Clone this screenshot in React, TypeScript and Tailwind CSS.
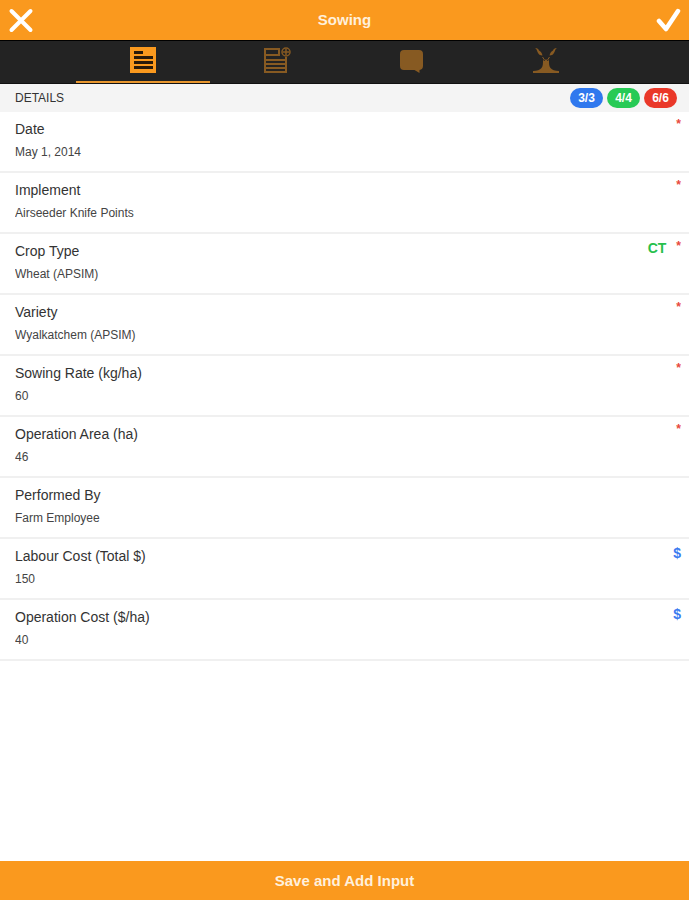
import { useState } from "react";

type Field = {
  id: string;
  label: string;
  value: string;
  required?: boolean;
  cost?: boolean;
  tag?: string;
};

const FIELDS: Field[] = [
  { id: "date", label: "Date", value: "May 1, 2014", required: true },
  { id: "implement", label: "Implement", value: "Airseeder Knife Points", required: true },
  { id: "crop", label: "Crop Type", value: "Wheat (APSIM)", required: true, tag: "CT" },
  { id: "variety", label: "Variety", value: "Wyalkatchem (APSIM)", required: true },
  { id: "rate", label: "Sowing Rate (kg/ha)", value: "60", required: true },
  { id: "area", label: "Operation Area (ha)", value: "46", required: true },
  { id: "performed", label: "Performed By", value: "Farm Employee" },
  { id: "labour", label: "Labour Cost (Total $)", value: "150", cost: true },
  { id: "operation", label: "Operation Cost ($/ha)", value: "40", cost: true },
];

function DetailsIcon() {
  return (
    <svg width="28" height="28" viewBox="0 0 28 28" fill="currentColor">
      <rect x="1" y="2" width="26" height="26" />
      <g fill="#2a1a0a">
        <rect x="5" y="6" width="9" height="3" />
        <rect x="5" y="11" width="19" height="3" />
        <rect x="5" y="16" width="19" height="3" />
        <rect x="5" y="21" width="19" height="3" />
      </g>
    </svg>
  );
}

function AddInputIcon() {
  return (
    <svg width="28" height="28" viewBox="0 0 28 28" fill="none" stroke="currentColor" strokeWidth="2">
      <path d="M17 4H2v23h21V12" />
      <path d="M2 10h15M2 15h21M2 19h21M2 23h21M16 4v6" />
      <circle cx="23" cy="7" r="4" strokeWidth="1.500" />
      <path d="M23 4v6M20 7h6" strokeWidth="1.500" />
    </svg>
  );
}

function CommentIcon() {
  return (
    <svg width="28" height="28" viewBox="0 0 28 28" fill="currentColor">
      <path d="M6 5h15a4 4 0 0 1 4 4v12a4 4 0 0 1-3.500 4v3l-5-3H6a4 4 0 0 1-4-4V9a4 4 0 0 1 4-4z" />
    </svg>
  );
}

function SoilIcon() {
  return (
    <svg width="28" height="28" viewBox="0 0 28 28" fill="currentColor">
      <path d="M1 28v-2c4-.3 7-1 8.500-3 1.500-1.500 1.500-4.500 1.500-8l1.500 1 1.500-2 1.500 2 1.500-1c0 3.500 0 6.500 1.500 8 1.500 2 4.500 2.700 8.500 3v2z" />
      <path d="M3 3c2.500 0 3.500 1 4 2.500 1.500.5 3 2.500 3.500 5-2.500 0-4-1-5-3.500C5 5.500 4.500 4 3 3z" />
      <path d="M25 3c-2.500 0-3.500 1-4 2.500-1.500.5-3 2.500-3.500 5 2.500 0 4-1 5-3.500.5-1.500 1-3 2.500-4z" />
      <path d="M10.500 12l2 3M17.500 12l-2 3" stroke="currentColor" strokeWidth="1" />
    </svg>
  );
}

const TABS = [
  { name: "Details", Icon: DetailsIcon },
  { name: "Inputs", Icon: AddInputIcon },
  { name: "Comments", Icon: CommentIcon },
  { name: "Soil", Icon: SoilIcon },
];

export default function App() {
  const [tab, setTab] = useState(0);
  const [values, setValues] = useState(() => FIELDS.map((f) => f.value));

  const changeValue = (index: number, value: string) => {
    setValues(values.map((v, i) => (i === index ? value : v)));
  };

  return (
    <div className="flex min-h-screen flex-col bg-white font-['Liberation_Sans',Arial,sans-serif] text-[#333333]">
      {/* TOP BAR */}
      <header className="flex h-10 items-center justify-between bg-[#fa991e] px-2 text-white">
        <button type="button" aria-label="Close">
          <svg width="26" height="26" viewBox="0 0 26 26" fill="none" stroke="currentColor" strokeWidth="4" strokeLinecap="round">
            <path d="M3.500 4l19 19M22.500 4l-19 19" />
          </svg>
        </button>
        <h1 className="text-[15px] leading-6 font-bold text-[#fff0dc]">Sowing</h1>
        <button type="button" aria-label="Done">
          <svg width="26" height="26" viewBox="0 0 26 26" fill="none" stroke="currentColor" strokeWidth="4.500" strokeLinecap="round" strokeLinejoin="round">
            <path d="M4 14l7 8L23 4" />
          </svg>
        </button>
      </header>

      {/* TABS */}
      <nav className="flex h-11 border-t border-b border-t-black border-b-[#111] bg-[#232323] px-[11%]">
        {TABS.map(({ name, Icon }, i) => (
          <button
            key={name}
            type="button"
            aria-label={name}
            onClick={() => setTab(i)}
            className={`flex flex-1 justify-center border-b-2 pt-1 ${
              tab === i ? "border-[#e8962e] text-[#fa991e]" : "border-transparent text-[#875a22]"
            }`}
          >
            <Icon />
          </button>
        ))}
      </nav>

      {/* SECTION TITLE */}
      <div className="flex h-7 items-center justify-between bg-[#f4f4f4] pr-3 pl-[15px]">
        <h2 className="text-xs">DETAILS</h2>
        <div className="flex gap-1 text-xs font-bold text-white">
          <span className="w-[33px] rounded-full bg-[#2f78ee] text-center leading-5">3/3</span>
          <span className="w-[33px] rounded-full bg-[#27ca55] text-center leading-5">4/4</span>
          <span className="w-[33px] rounded-full bg-[#ea3829] text-center leading-5">6/6</span>
        </div>
      </div>

      {/* FIELDS */}
      <main className="flex-1">
        {FIELDS.map((field, i) => (
          <div key={field.id} className="flex h-[61px] border-b-2 border-[#f0f0f0] pr-2 pl-[15px]">
            <div className="flex-1 pt-1">
              <label htmlFor={field.id} className="block text-sm leading-[26px]">
                {field.label}
              </label>
              <input
                id={field.id}
                type="text"
                value={values[i]}
                onChange={(e) => changeValue(i, e.target.value)}
                className="block h-5 w-full bg-transparent text-xs text-[#444444] outline-none"
              />
            </div>
            <div className="flex gap-2.5 pt-1 text-sm leading-5 font-bold">
              {field.tag && <span className="text-[#27c04d]">{field.tag}</span>}
              {field.required && <span className="text-xs leading-4 text-[#e8483c]">*</span>}
              {field.cost && <span className="text-[#3b7bf0]">$</span>}
            </div>
          </div>
        ))}
      </main>

      {/* FOOTER */}
      <button type="button" className="h-[39px] bg-[#fa991e] text-[15px] leading-6 font-bold text-[#fff0dc]">
        Save and Add Input
      </button>
    </div>
  );
}
